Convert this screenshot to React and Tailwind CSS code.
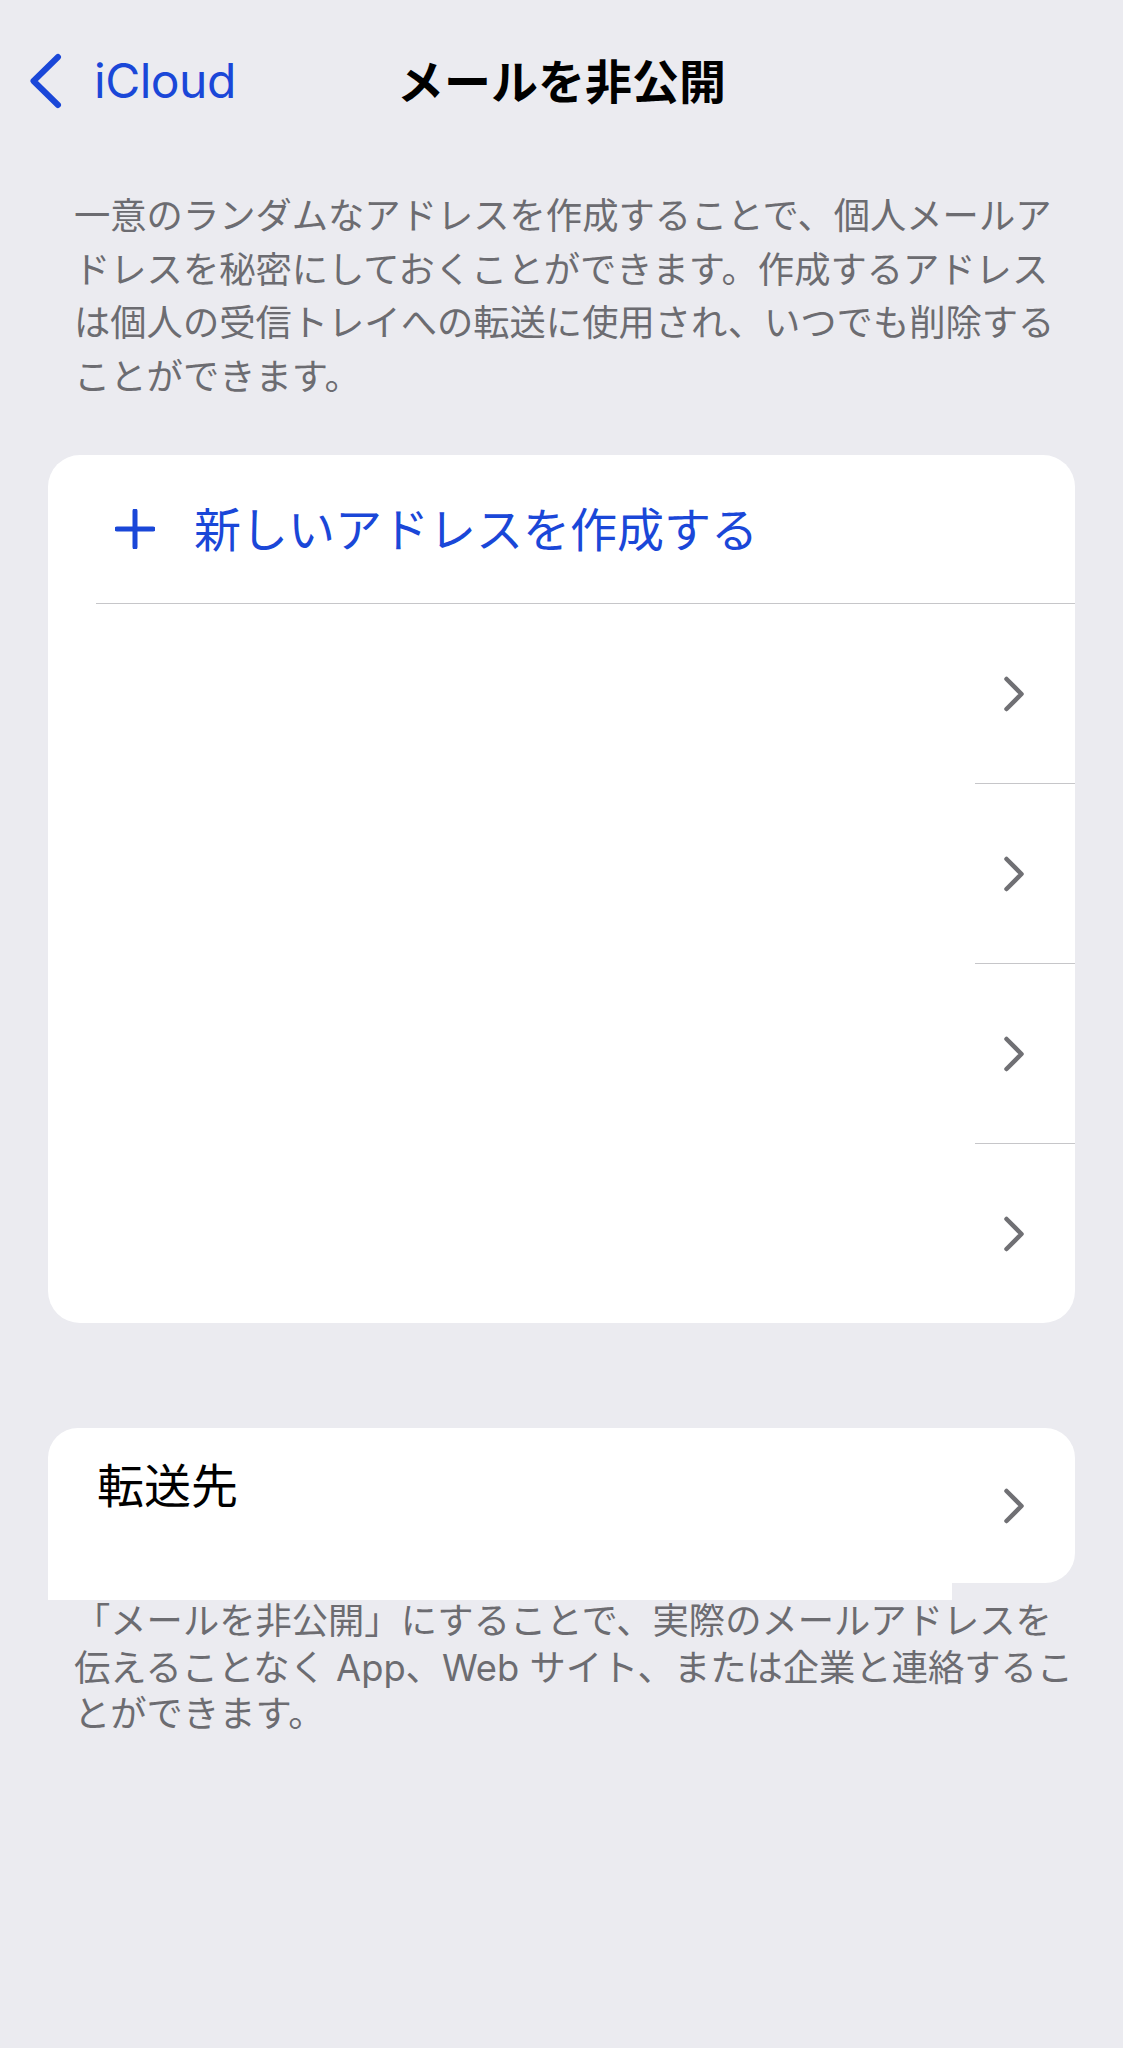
// iOS 設定 > iCloud > メールを非公開
const FONT = "font-['Inter','Noto_Sans_CJK_JP',sans-serif]"

const DESC = [
  '一意のランダムなアドレスを作成することで、個人メールア',
  'ドレスを秘密にしておくことができます。作成するアドレス',
  'は個人の受信トレイへの転送に使用され、いつでも削除する',
  'ことができます。',
]

const FOOTER = [
  '「メールを非公開」にすることで、実際のメールアドレスを',
  '伝えることなく App、Web サイト、または企業と連絡するこ',
  'とができます。',
]

function Chevron() {
  return (
    <svg width="22" height="36" viewBox="0 0 22 36" className="shrink-0">
      <polyline points="3.5,3 18.5,18 3.5,33" fill="none" stroke="#707074" strokeWidth="4.5" strokeLinecap="round" strokeLinejoin="round" />
    </svg>
  )
}

function AddressRow() {
  return (
    <div className="h-[179px] flex items-center justify-end pr-[50px]">
      <Chevron />
    </div>
  )
}

export default function App() {
  return (
    <div className={`min-h-[2048px] bg-[#ebebf0] pt-[40px] ${FONT}`}>
      {/* ナビゲーションバー */}
      <div className="grid grid-cols-[1fr_auto_1fr] items-center h-[82px]">
        <div className="flex items-center pl-[29px] gap-[31px]">
          <svg width="34" height="56" viewBox="0 0 34 56">
            <polyline points="29,4 4.5,28 29,52" fill="none" stroke="#1a47d8" strokeWidth="6" strokeLinecap="round" strokeLinejoin="round" />
          </svg>
          <span className="text-[48px] leading-none text-[#1a47d8] tracking-[-0.5px]">iCloud</span>
        </div>
        <h1 className="text-[47px] font-bold leading-none text-black">メールを非公開</h1>
        <div />
      </div>

      {/* 説明 */}
      <div className="mt-[68px] pl-[74px] text-[36.3px] leading-[53.5px] text-[#6c6c71]">
        {DESC.map(l => <div key={l} className="whitespace-nowrap">{l}</div>)}
      </div>

      {/* アドレス一覧 */}
      <div className="mt-[51px] mx-[48px] bg-white rounded-[32px] overflow-hidden">
        <div className="h-[148px] flex items-center pl-[67px] gap-[39px]">
          <svg width="40" height="40" viewBox="0 0 40 40" className="shrink-0">
            <path d="M20 2v36M2 20h36" stroke="#1a47d8" strokeWidth="5" strokeLinecap="round" />
          </svg>
          <span className="text-[47px] leading-none text-[#1a47d8]">新しいアドレスを作成する</span>
        </div>
        <div className="ml-[48px] h-px bg-[#c6c6c9]" />
        <AddressRow />
        <div className="ml-[927px] h-px bg-[#c6c6c9]" />
        <AddressRow />
        <div className="ml-[927px] h-px bg-[#c6c6c9]" />
        <AddressRow />
        <div className="ml-[927px] h-px bg-[#c6c6c9]" />
        <AddressRow />
      </div>

      {/* 転送先 */}
      <div className="mt-[105px] mx-[48px]">
        <div className="h-[155px] bg-white rounded-[30px] rounded-bl-none flex justify-between pl-[49px] pr-[50px]">
          <div className="self-start pt-[34px] text-[47px] leading-[47px] text-black">転送先</div>
          <div className="self-center"><Chevron /></div>
        </div>
        <div className="w-[904px] h-[17px] bg-white" />
      </div>

      <div className="-mt-[2px] pl-[74px] text-[36.3px] leading-[46.5px] text-[#6c6c71]">
        {FOOTER.map(l => <div key={l} className="whitespace-nowrap">{l}</div>)}
      </div>
    </div>
  )
}
